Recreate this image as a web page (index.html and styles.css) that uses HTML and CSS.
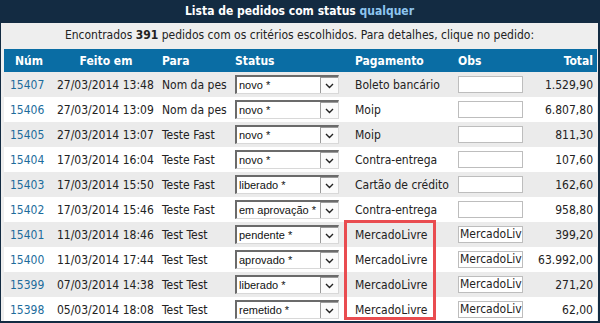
FILE: index.html
```html
<!DOCTYPE html>
<html lang="pt-BR">
<head>
  <meta charset="UTF-8">
  <title>Lista de pedidos</title>
  <link rel="stylesheet" href="styles.css">
</head>
<body>
  <div class="panel">
    <h1 class="panel-title">Lista de pedidos com status <span class="hl">qualquer</span></h1>
    <p class="summary">Encontrados <strong>391</strong> pedidos com os critérios escolhidos. Para detalhes, clique no pedido:</p>

    <div class="table-wrap">
      <table class="orders">
        <colgroup>
          <col class="c-num"><col class="c-date"><col class="c-to"><col class="c-status"><col class="c-pay"><col class="c-obs"><col class="c-total">
        </colgroup>
        <thead>
          <tr>
            <th class="center">Núm</th>
            <th class="center">Feito em</th>
            <th>Para</th>
            <th>Status</th>
            <th>Pagamento</th>
            <th>Obs</th>
            <th class="right">Total</th>
          </tr>
        </thead>
        <tbody>
          <tr>
            <td class="num"><a href="#">15407</a></td><td>27/03/2014 13:48</td><td>Nom da pes</td>
            <td><span class="select">novo *<span class="drop"><svg width="9" height="6" viewBox="0 0 9 6"><path d="M1 1 L4.5 4.5 L8 1" fill="none" stroke="#222" stroke-width="1.4"/></svg></span></span></td>
            <td>Boleto bancário</td><td><span class="obs"></span></td><td class="right">1.529,90</td>
          </tr>
          <tr>
            <td class="num"><a href="#">15406</a></td><td>27/03/2014 13:09</td><td>Nom da pes</td>
            <td><span class="select">novo *<span class="drop"><svg width="9" height="6" viewBox="0 0 9 6"><path d="M1 1 L4.5 4.5 L8 1" fill="none" stroke="#222" stroke-width="1.4"/></svg></span></span></td>
            <td>Moip</td><td><span class="obs"></span></td><td class="right">6.807,80</td>
          </tr>
          <tr>
            <td class="num"><a href="#">15405</a></td><td>27/03/2014 13:07</td><td>Teste Fast</td>
            <td><span class="select">novo *<span class="drop"><svg width="9" height="6" viewBox="0 0 9 6"><path d="M1 1 L4.5 4.5 L8 1" fill="none" stroke="#222" stroke-width="1.4"/></svg></span></span></td>
            <td>Moip</td><td><span class="obs"></span></td><td class="right">811,30</td>
          </tr>
          <tr>
            <td class="num"><a href="#">15404</a></td><td>17/03/2014 16:04</td><td>Teste Fast</td>
            <td><span class="select">novo *<span class="drop"><svg width="9" height="6" viewBox="0 0 9 6"><path d="M1 1 L4.5 4.5 L8 1" fill="none" stroke="#222" stroke-width="1.4"/></svg></span></span></td>
            <td>Contra-entrega</td><td><span class="obs"></span></td><td class="right">107,60</td>
          </tr>
          <tr>
            <td class="num"><a href="#">15403</a></td><td>17/03/2014 15:50</td><td>Teste Fast</td>
            <td><span class="select">liberado *<span class="drop"><svg width="9" height="6" viewBox="0 0 9 6"><path d="M1 1 L4.5 4.5 L8 1" fill="none" stroke="#222" stroke-width="1.4"/></svg></span></span></td>
            <td>Cartão de crédito</td><td><span class="obs"></span></td><td class="right">162,60</td>
          </tr>
          <tr>
            <td class="num"><a href="#">15402</a></td><td>17/03/2014 15:46</td><td>Teste Fast</td>
            <td><span class="select">em aprovação *<span class="drop"><svg width="9" height="6" viewBox="0 0 9 6"><path d="M1 1 L4.5 4.5 L8 1" fill="none" stroke="#222" stroke-width="1.4"/></svg></span></span></td>
            <td>Contra-entrega</td><td><span class="obs"></span></td><td class="right">958,80</td>
          </tr>
          <tr>
            <td class="num"><a href="#">15401</a></td><td>11/03/2014 18:46</td><td>Test Test</td>
            <td><span class="select">pendente *<span class="drop"><svg width="9" height="6" viewBox="0 0 9 6"><path d="M1 1 L4.5 4.5 L8 1" fill="none" stroke="#222" stroke-width="1.4"/></svg></span></span></td>
            <td>MercadoLivre</td><td><span class="obs">MercadoLiv</span></td><td class="right">399,20</td>
          </tr>
          <tr>
            <td class="num"><a href="#">15400</a></td><td>11/03/2014 17:44</td><td>Test Test</td>
            <td><span class="select">aprovado *<span class="drop"><svg width="9" height="6" viewBox="0 0 9 6"><path d="M1 1 L4.5 4.5 L8 1" fill="none" stroke="#222" stroke-width="1.4"/></svg></span></span></td>
            <td>MercadoLivre</td><td><span class="obs">MercadoLiv</span></td><td class="right">63.992,00</td>
          </tr>
          <tr>
            <td class="num"><a href="#">15399</a></td><td>07/03/2014 14:38</td><td>Test Test</td>
            <td><span class="select">liberado *<span class="drop"><svg width="9" height="6" viewBox="0 0 9 6"><path d="M1 1 L4.5 4.5 L8 1" fill="none" stroke="#222" stroke-width="1.4"/></svg></span></span></td>
            <td>MercadoLivre</td><td><span class="obs">MercadoLiv</span></td><td class="right">271,20</td>
          </tr>
          <tr>
            <td class="num"><a href="#">15398</a></td><td>05/03/2014 18:08</td><td>Test Test</td>
            <td><span class="select">remetido *<span class="drop"><svg width="9" height="6" viewBox="0 0 9 6"><path d="M1 1 L4.5 4.5 L8 1" fill="none" stroke="#222" stroke-width="1.4"/></svg></span></span></td>
            <td>MercadoLivre</td><td><span class="obs">MercadoLiv</span></td><td class="right">62,00</td>
          </tr>
        </tbody>
      </table>
      <div class="highlight"></div>
    </div>
  </div>
</body>
</html>
```

FILE: styles.css
```css
html, body {
  margin: 0;
  padding: 0;
  background: #eeeeee;
}

body {
  font-family: "DejaVu Sans Condensed", "DejaVu Sans", sans-serif;
  font-size: 12px;
  color: #222;
}

.panel {
  box-sizing: border-box;
  height: 323px;
  overflow: hidden;
  background: #eeeeee;
  border-left: 1px solid #132b42;
  border-right: 2px solid #132b42;
  border-bottom: 2px solid #132b42;
}

.panel-title {
  margin: 0;
  height: 23px;
  line-height: 23px;
  background: #132b42;
  color: #fff;
  font-size: 12px;
  font-weight: bold;
  text-align: center;
}

.panel-title .hl {
  color: #8ec5ef;
}

.summary {
  margin: 0;
  height: 26px;
  line-height: 24px;
  text-align: center;
}

.table-wrap {
  position: relative;
  margin: 0 1px 0 3px;
}

.orders {
  width: 100%;
  border-collapse: collapse;
  table-layout: fixed;
}

.c-num { width: 50px; }
.c-date { width: 104px; }
.c-to { width: 73px; }
.c-status { width: 120px; }
.c-pay { width: 103px; }
.c-obs { width: 76px; }

.orders th {
  background: #0a6da4;
  color: #fff;
  font-weight: bold;
  height: 23px;
  padding: 0 4px;
  text-align: left;
}

.orders td {
  height: 25px;
  padding: 0 4px;
  white-space: nowrap;
  overflow: hidden;
}

.orders td:nth-child(2) {
  padding-left: 3px;
}

.orders td.num {
  padding-left: 6px;
}

.orders tbody tr:nth-child(odd) td {
  background: #ebebeb;
}

.orders tbody tr:nth-child(even) td {
  background: #fff;
}

.orders .center {
  text-align: center;
}

.orders .right {
  text-align: right;
}

.orders a {
  color: #1c6c9c;
  text-decoration: none;
}

.select {
  box-sizing: border-box;
  display: flex;
  align-items: center;
  width: 104px;
  height: 19px;
  padding-left: 2px;
  background: #fff;
  border-top: 2px solid #6b6b6b;
  border-left: 2px solid #6b6b6b;
  border-right: 1px solid #d8d8d8;
  border-bottom: 1px solid #d8d8d8;
  font-family: "Liberation Sans", Arial, sans-serif;
  font-size: 11px;
  color: #111;
}

.select .drop {
  box-sizing: border-box;
  margin-left: auto;
  width: 18px;
  height: 16px;
  display: flex;
  align-items: center;
  justify-content: center;
  border: 1px solid #9a9a9a;
  border-right: none;
  border-bottom: none;
  background: #fbfbfb;
}

.obs {
  box-sizing: border-box;
  display: block;
  width: 65px;
  height: 17px;
  line-height: 15px;
  padding-left: 1px;
  overflow: hidden;
  background: #fff;
  border: 1px solid #bdbdbd;
}

.highlight {
  position: absolute;
  left: 340px;
  top: 171px;
  width: 92px;
  height: 100px;
  box-sizing: border-box;
  border: 3px solid #e94c50;
}
```
